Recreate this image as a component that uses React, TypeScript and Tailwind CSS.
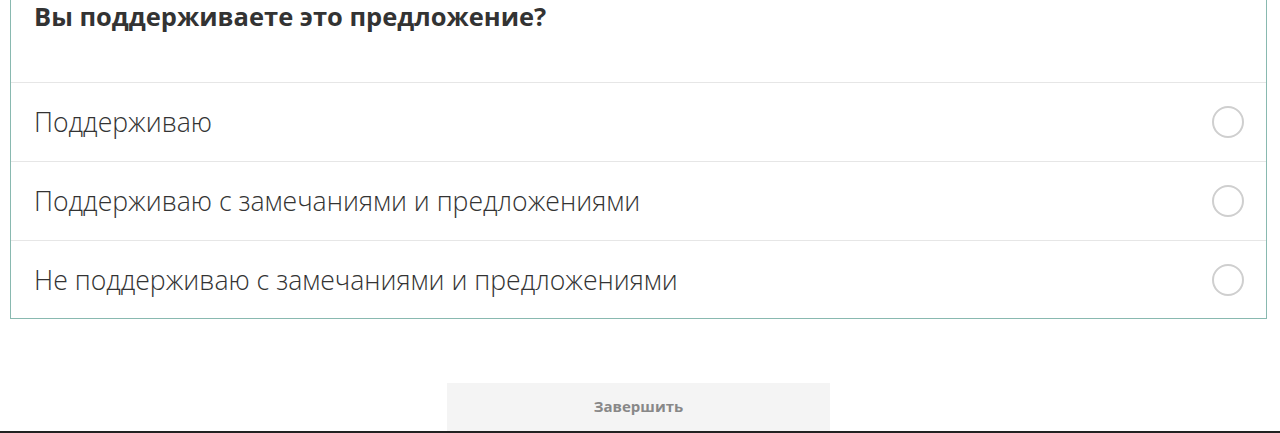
const options = [
  'Поддерживаю',
  'Поддерживаю с замечаниями и предложениями',
  'Не поддерживаю с замечаниями и предложениями',
]

export default function App() {
  return (
    <div className="h-[433px] overflow-hidden bg-white font-['Open_Sans',sans-serif]">
      <div className="ml-[10px] -mt-[20px] w-[1257px] border border-[#89b9b0] bg-white">
        <div className="h-[101px] pl-[23px] pt-[18px]">
          <h2 className="text-[25.5px] leading-[34px] font-bold text-[#333]">
            Вы поддерживаете это предложение?
          </h2>
        </div>
        {options.map((opt) => (
          <label
            key={opt}
            className="flex h-[79px] cursor-pointer items-center justify-between border-t border-[#e6e6e6] pl-[23px] pr-[22px] last:h-[78px]"
          >
            <span className="text-[26.6px] leading-[34px] font-light text-[#333]">{opt}</span>
            <span className="h-[32px] w-[32px] rounded-full border-2 border-[#cfcfcf]" />
          </label>
        ))}
      </div>

      <div className="mt-[64px] flex justify-center border-b-2 border-[#222]">
        <button className="ml-[-3px] h-[48px] w-[383px] bg-[#f4f4f4] pb-[1px] text-[15px] font-bold text-[#888]">
          Завершить
        </button>
      </div>
    </div>
  )
}
